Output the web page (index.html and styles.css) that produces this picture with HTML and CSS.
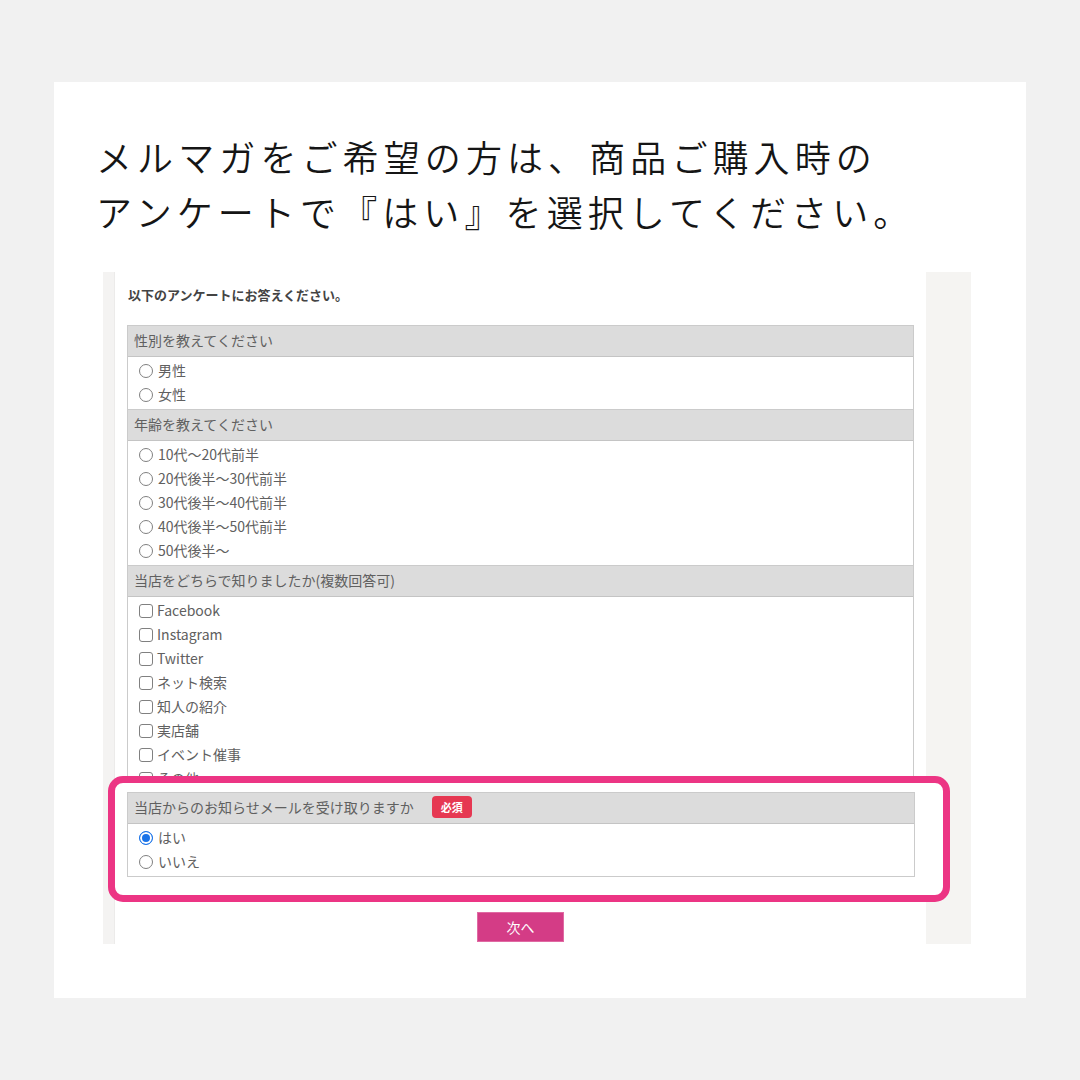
FILE: index.html
```html
<!DOCTYPE html>
<html lang="ja">
<head>
<meta charset="utf-8">
<link rel="stylesheet" href="styles.css">
</head>
<body>
<div class="card">
  <h1 class="headline">メルマガをご希望の方は、商品ご購入時の<br>アンケートで『はい』を選択してください。</h1>
  <div class="shot">
    <div class="stripe"></div>
    <div class="main">
      <p class="intro">以下のアンケートにお答えください。</p>
      <div class="table">
        <div class="q">性別を教えてください</div>
        <div class="a">
          <div class="opt"><span class="radio"></span>男性</div>
          <div class="opt"><span class="radio"></span>女性</div>
        </div>
        <div class="q">年齢を教えてください</div>
        <div class="a">
          <div class="opt"><span class="radio"></span>10代～20代前半</div>
          <div class="opt"><span class="radio"></span>20代後半～30代前半</div>
          <div class="opt"><span class="radio"></span>30代後半～40代前半</div>
          <div class="opt"><span class="radio"></span>40代後半～50代前半</div>
          <div class="opt"><span class="radio"></span>50代後半～</div>
        </div>
        <div class="q">当店をどちらで知りましたか(複数回答可)</div>
        <div class="a a-last">
          <div class="opt"><span class="check"></span>Facebook</div>
          <div class="opt"><span class="check"></span>Instagram</div>
          <div class="opt"><span class="check"></span>Twitter</div>
          <div class="opt"><span class="check"></span>ネット検索</div>
          <div class="opt"><span class="check"></span>知人の紹介</div>
          <div class="opt"><span class="check"></span>実店舗</div>
          <div class="opt"><span class="check"></span>イベント催事</div>
          <div class="opt"><span class="check"></span>その他</div>
        </div>
      </div>
      <div class="highlight">
        <div class="table">
          <div class="q">当店からのお知らせメールを受け取りますか<span class="badge">必須</span></div>
          <div class="a">
            <div class="opt"><span class="radio checked"></span>はい</div>
            <div class="opt"><span class="radio"></span>いいえ</div>
          </div>
        </div>
      </div>
      <div class="actions"><span class="btn">次へ</span></div>
    </div>
    <div class="side"></div>
  </div>
</div>
</body>
</html>
```

FILE: styles.css
```css
html, body {
  margin: 0;
  padding: 0;
}
body {
  background: #f1f1f1;
  width: 1080px;
  height: 1080px;
  overflow: hidden;
  font-family: "Noto Sans CJK JP", "Noto Sans", sans-serif;
}
.card {
  margin: 82px 0 0 54px;
  width: 972px;
  height: 916px;
  background: #ffffff;
  box-sizing: border-box;
  padding: 47px 0 0 42px;
}
.headline {
  margin: 0;
  font-size: 36px;
  font-weight: 350;
  line-height: 55px;
  letter-spacing: 5.1px;
  color: #151515;
  white-space: nowrap;
}
.shot {
  margin: 33px 0 0 7px;
  width: 868px;
  height: 672px;
  display: flex;
}
.stripe {
  width: 12px;
  background: #f4f3f2;
  border-right: 1px solid #ecebea;
  box-sizing: border-box;
}
.side {
  width: 45px;
  background: #f5f4f2;
}
.main {
  width: 811px;
  background: #ffffff;
  box-sizing: border-box;
  padding: 13px 12px 0 12px;
}
.intro {
  margin: 0 0 20px 1px;
  font-size: 13px;
  line-height: 20px;
  font-weight: bold;
  color: #444;
}
.table {
  border: 1px solid #cbcbcb;
  border-bottom: none;
  color: #606060;
  font-size: 14px;
}
.q {
  box-sizing: border-box;
  padding: 0 0 2px 6px;
  background: #dcdcdc;
  border-bottom: 1px solid #c4c4c4;
  height: 31px;
  display: flex;
  align-items: center;
}
.a {
  padding: 2px 0 2px 11px;
  border-bottom: 1px solid #cbcbcb;
}
.a-last {
  border-bottom: none;
}
.opt {
  height: 24px;
  box-sizing: border-box;
  padding-bottom: 2px;
  display: flex;
  align-items: center;
}
.radio {
  width: 14px;
  height: 14px;
  border: 1px solid #808080;
  border-radius: 50%;
  box-sizing: border-box;
  margin: 2px 5px 0 0;
  background: #fff;
  flex: none;
}
.radio.checked {
  border: 1px solid #1a73e8;
  background: #1a73e8;
  box-shadow: inset 0 0 0 2px #fff;
}
.check {
  width: 14px;
  height: 14px;
  border: 1px solid #808080;
  border-radius: 3px;
  box-sizing: border-box;
  margin: 2px 4px 0 0;
  background: #fff;
  flex: none;
}
.badge {
  margin-left: 18px;
  height: 22px;
  width: 40px;
  border-radius: 4px;
  background: #e63852;
  color: #fff;
  font-size: 11px;
  font-weight: bold;
  line-height: 22px;
  text-align: center;
}
.highlight {
  position: relative;
  z-index: 1;
  margin: -17px -36px 0 -19px;
  border: 7px solid #ec3584;
  border-radius: 15px;
  background: #ffffff;
  padding: 9px 28px 18px 12px;
}
.actions {
  display: flex;
  justify-content: center;
  margin-top: 10px;
}
.btn {
  width: 87px;
  height: 30px;
  box-sizing: border-box;
  background: #d43c86;
  border: 1px solid #e06aa3;
  color: #fff;
  font-size: 14px;
  line-height: 28px;
  text-align: center;
}
```
